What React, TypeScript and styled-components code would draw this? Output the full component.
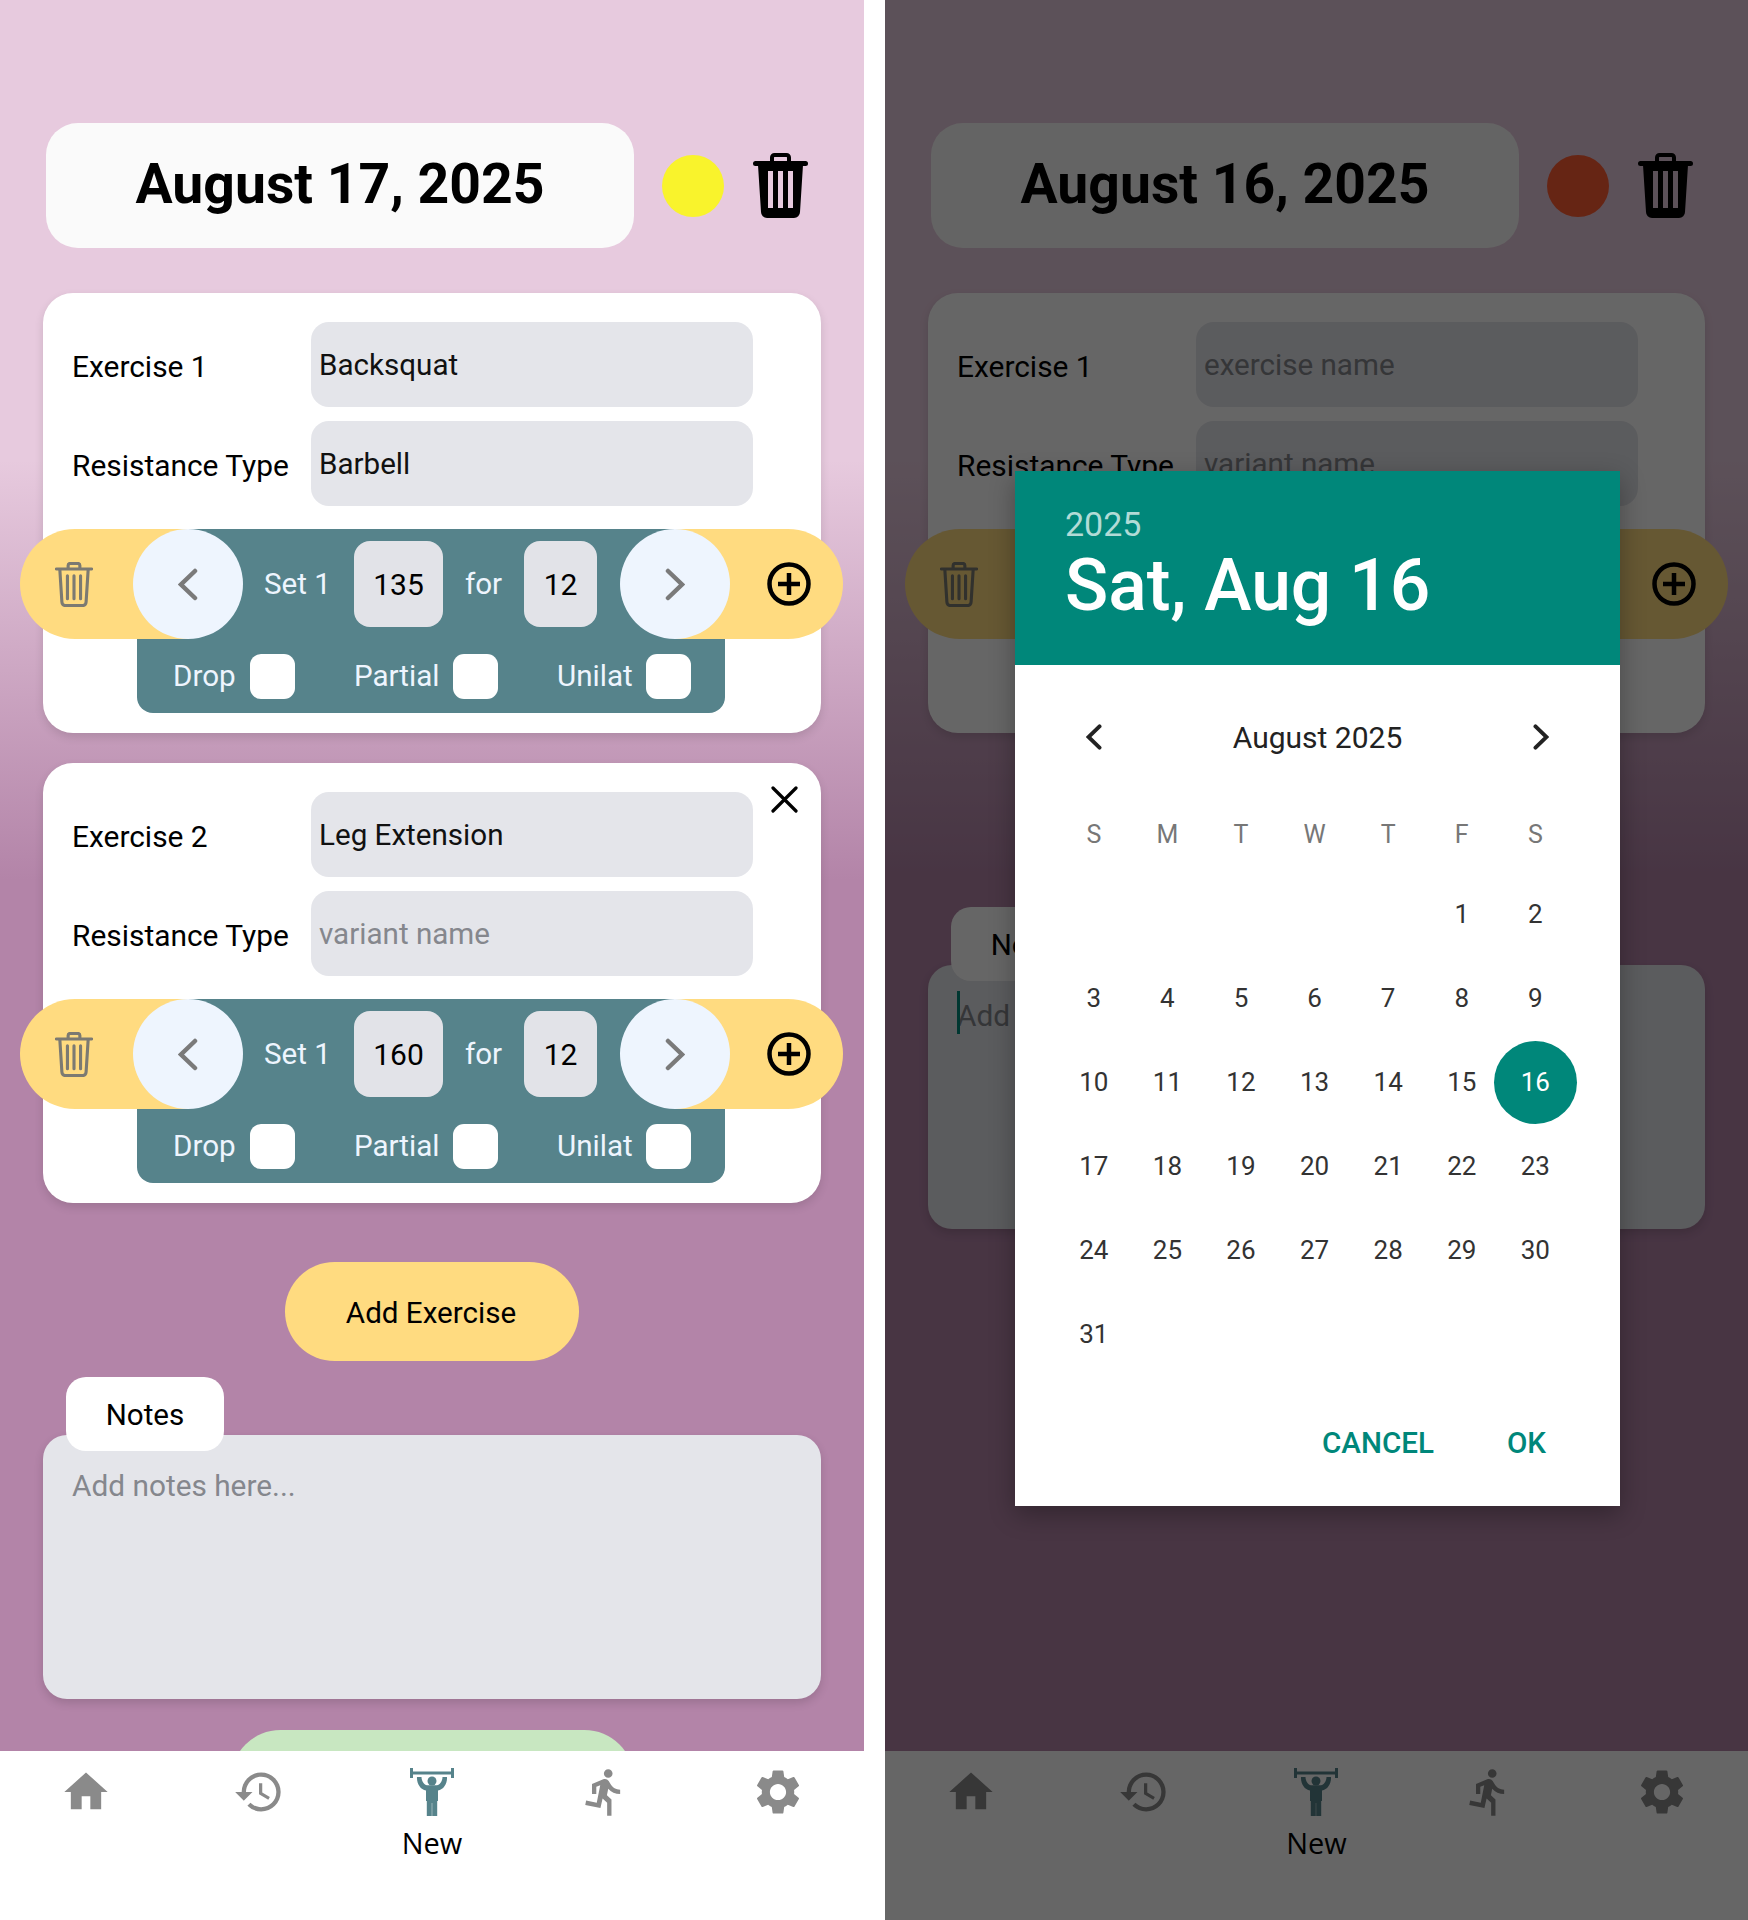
import {FC} from "react";
import styled, {createGlobalStyle} from "styled-components";
import {MdDirectionsRun, MdHistory, MdHome, MdSettings} from "react-icons/md";

const GlobalStyle = createGlobalStyle`
  * { box-sizing: border-box; }
  html, body { margin: 0; padding: 0; background: #fff; }
  body { font-family: Roboto, "Liberation Sans", sans-serif; color: #000; }
`;

const Page = styled.div`
  display: grid;
  grid-template-columns: 864px 863px;
  column-gap: 21px;
  width: 1748px;
  height: 1920px;
  overflow: hidden;
`;

const Phone = styled.div`
  position: relative;
  display: flex;
  flex-direction: column;
  height: 1920px;
  overflow: hidden;
`;

const Content = styled.div`
  flex: 1;
  min-height: 0;
  overflow: hidden;
  padding: 123px 43px 0;
  background: linear-gradient(180deg, #e7cade 0, #e7cade 460px, #b384a8 880px);
`;

const Header = styled.div`
  display: flex;
  align-items: center;
  height: 125px;
  margin-bottom: 45px;
  padding-left: 3px;
`;

const DatePill = styled.div`
  width: 588px;
  height: 125px;
  padding-bottom: 2px;
  border-radius: 32px;
  background: #fafafa;
  display: flex;
  align-items: center;
  justify-content: center;
  font-size: 55.300px;
  font-weight: 700;
`;

const StatusDot = styled.div<{$color: string}>`
  width: 62px;
  height: 62px;
  margin: 0 29px 0 28px;
  border-radius: 50%;
  background: ${(p) => p.$color};
`;

const Card = styled.div`
  position: relative;
  height: 440px;
  margin-bottom: 30px;
  padding: 29px 30px 20px;
  border-radius: 30px;
  background: #fff;
  box-shadow: 0 4px 10px rgba(0, 0, 0, 0.12);
`;

const FieldRow = styled.div`
  display: flex;
  align-items: center;
  height: 85px;
  margin-bottom: 14px;
`;

const FieldLabel = styled.div`
  width: 238px;
  margin-left: -1px;
  padding-top: 4px;
  font-size: 29.900px;
`;

const FieldBox = styled.div<{$empty?: boolean}>`
  width: 442px;
  height: 85px;
  margin-left: 1px;
  padding: 0 0 0 8px;
  border-radius: 18px;
  background: #e4e5ea;
  display: flex;
  align-items: center;
  font-size: 29.600px;
  color: ${(p) => (p.$empty ? "#85878d" : "#111")};
`;

const CloseButton = styled.svg`
  position: absolute;
  top: 23px;
  right: 23px;
  width: 27px;
  height: 27px;
`;

const SetBlock = styled.div`
  width: 823px;
  margin: 23px 0 0 -53px;
`;

const YellowPill = styled.div`
  display: flex;
  height: 110px;
  border-radius: 55px;
  background: #ffdb80;
`;

const LeftCap = styled.div`
  width: 117px;
  padding-left: 35px;
  display: flex;
  align-items: center;
`;

const RightCap = styled.div`
  width: 118px;
  padding-left: 42px;
  display: flex;
  align-items: center;
`;

// the teal only starts behind the middle of the round buttons, yellow shows around them
const SetRow = styled.div`
  width: 588px;
  display: flex;
  align-items: center;
  background: linear-gradient(90deg, transparent 51px, #56838b 51px, #56838b 537px, transparent 537px);
`;

const RoundButton = styled.div<{$side: "left" | "right"}>`
  flex: none;
  width: 110px;
  height: 110px;
  border-radius: 50%;
  background: #eef5fe;
  display: flex;
  align-items: center;
  justify-content: center;
  margin-left: ${(p) => (p.$side === "left" ? "-4px" : "23px")};
  margin-right: ${(p) => (p.$side === "right" ? "-6px" : "21px")};
`;

const SetText = styled.div<{$width: number; $center?: boolean}>`
  width: ${(p) => p.$width}px;
  font-size: 29.600px;
  color: #eef5fe;
  text-align: ${(p) => (p.$center ? "center" : "left")};
`;

const NumberBox = styled.div<{$width: number}>`
  flex: none;
  width: ${(p) => p.$width}px;
  height: 86px;
  border-radius: 16px;
  background: #e2e3e8;
  display: flex;
  align-items: center;
  justify-content: center;
  font-size: 30px;
  color: #000;
`;

const FlagRow = styled.div`
  width: 588px;
  height: 74px;
  margin-left: 117px;
  padding: 0 0 0 36px;
  display: flex;
  align-items: center;
  border-radius: 0 0 16px 16px;
  background: #56838b;
`;

const FlagItem = styled.div<{$width: number}>`
  width: ${(p) => p.$width}px;
  display: flex;
  align-items: center;
  justify-content: space-between;
  font-size: 29.600px;
  color: #eef5fe;
`;

const FlagGroup = styled.div<{$width: number}>`
  width: ${(p) => p.$width}px;
`;

const Checkbox = styled.div`
  width: 45px;
  height: 45px;
  border-radius: 11px;
  background: #fff;
`;

const AddExercise = styled.div`
  width: 294px;
  height: 99px;
  margin: 59px auto 0;
  padding: 2px 2px 0 0;
  border-radius: 50px;
  background: #ffdb80;
  display: flex;
  align-items: center;
  justify-content: center;
  font-size: 29.600px;
`;

const NotesTab = styled.div`
  position: relative;
  z-index: 1;
  width: 158px;
  height: 74px;
  margin: 16px 0 0 23px;
  padding-top: 2px;
  border-radius: 20px;
  background: #fff;
  display: flex;
  align-items: center;
  justify-content: center;
  font-size: 29.600px;
`;

const NotesArea = styled.div`
  position: relative;
  height: 264px;
  margin-top: -16px;
  padding: 32px 29px;
  border-radius: 24px;
  background: #e4e5ea;
  box-shadow: 0 4px 10px rgba(0, 0, 0, 0.14);
  font-size: 29.800px;
  line-height: 38px;
  color: #85878d;
`;

const Caret = styled.div`
  position: absolute;
  top: 26px;
  left: 29px;
  width: 3px;
  height: 43px;
  background: #00897b;
`;

const SaveButton = styled.div`
  width: 403px;
  height: 99px;
  margin: 31px auto 0;
  border-radius: 50px;
  background: #c8e7c1;
`;

const Nav = styled.div`
  flex: none;
  height: 169px;
  display: grid;
  grid-template-columns: repeat(5, 1fr);
  padding-top: 15px;
  background: #fff;
`;

const NavItem = styled.div<{$active?: boolean}>`
  display: flex;
  flex-direction: column;
  align-items: center;
  color: ${(p) => (p.$active ? "#56838b" : "#8a8a8a")};
`;

const NavSlot = styled.div`
  height: 52px;
  display: flex;
  align-items: center;
  justify-content: center;
`;

const NavLabel = styled.div`
  margin-top: 5px;
  font-family: "Open Sans", sans-serif;
  font-size: 29px;
  color: #000;
`;

const Scrim = styled.div`
  position: absolute;
  z-index: 2;
  inset: 0;
  background: rgba(0, 0, 0, 0.6);
`;

const Dialog = styled.div`
  position: absolute;
  z-index: 3;
  top: 471px;
  left: 130px;
  width: 605px;
  height: 1035px;
  display: flex;
  flex-direction: column;
  background: #fff;
  box-shadow: 0 8px 24px rgba(0, 0, 0, 0.3);
`;

const DialogHead = styled.div`
  height: 194px;
  padding: 32px 50px 0;
  background: #00877a;
  color: #fff;
`;

const HeadYear = styled.div`
  font-size: 34px;
  line-height: 42px;
  color: #b2dbd6;
`;

const HeadDate = styled.div`
  margin-top: 1px;
  font-size: 71.400px;
  line-height: 80px;
  font-weight: 500;
`;

const MonthRow = styled.div`
  height: 100px;
  margin: 22px 0 10px;
  padding: 0 71px;
  display: flex;
  align-items: center;
  justify-content: space-between;
  font-size: 30px;
  color: #222;
`;

const DayGrid = styled.div`
  display: grid;
  grid-template-columns: repeat(7, 73.6px);
  padding-left: 42px;
`;

const WeekCell = styled.div`
  height: 75px;
  display: flex;
  align-items: center;
  justify-content: center;
  font-size: 25px;
  color: #777;
`;

const DayCell = styled.div`
  height: 84px;
  display: flex;
  align-items: center;
  justify-content: center;
`;

const DayNumber = styled.div<{$selected?: boolean}>`
  width: 83px;
  height: 83px;
  flex: none;
  border-radius: 50%;
  display: flex;
  align-items: center;
  justify-content: center;
  font-size: 26px;
  background: ${(p) => (p.$selected ? "#00877a" : "transparent")};
  color: ${(p) => (p.$selected ? "#fff" : "#333")};
`;

const Actions = styled.div`
  margin-top: 35px;
  padding-right: 74px;
  height: 64px;
  display: flex;
  align-items: center;
  justify-content: flex-end;
  gap: 73px;
  font-size: 29.600px;
  font-weight: 500;
  color: #00877a;
`;

const TrashIcon: FC<{solid?: boolean; color: string; width: number; height: number}> = ({
  solid,
  color,
  width,
  height,
}) => (
  <svg width={width} height={height} viewBox="0 0 55 65">
    {solid ? (
      <>
        <path d="M19 9V4.5A2.5 2.5 0 0 1 21.500 2h12A2.500 2.500 0 0 1 36 4.500V9" fill="none" stroke={color} strokeWidth="4" />
        <rect x="0" y="8" width="55" height="5" rx="2.500" fill={color} />
        <path
          fillRule="evenodd"
          fill={color}
          d="M5 12h45l-3 47a6 6 0 0 1-6 6H14a6 6 0 0 1-6-6zM15 18v37h5V18zM25 18v37h5V18zM35 18v37h5V18z"
        />
      </>
    ) : (
      <g fill="none" stroke={color} strokeWidth="4.500" strokeLinecap="round" strokeLinejoin="round">
        <path d="M19 9V5a3 3 0 0 1 3-3h11a3 3 0 0 1 3 3v4" />
        <path d="M2 10h51" />
        <path d="M7 11l3 47a5 5 0 0 0 5 5h25a5 5 0 0 0 5-5l3-47" />
        <path d="M18 20v33M27.500 20v33M37 20v33" />
      </g>
    )}
  </svg>
);

const PlusIcon: FC = () => (
  <svg width="44" height="44" viewBox="0 0 44 44" fill="none" stroke="#000" strokeWidth="4.500">
    <circle cx="22" cy="22" r="19.500" />
    <path d="M22 11v22M11 22h22" />
  </svg>
);

const Chevron: FC<{dir: "left" | "right"; color: string; width: number; height: number; stroke: number}> = ({
  dir,
  color,
  width,
  height,
  stroke,
}) => (
  <svg width={width} height={height} viewBox="0 0 20 33" fill="none" stroke={color} strokeWidth={stroke} strokeLinecap="round">
    <path d={dir === "left" ? "M17 3L3 16.500 17 30" : "M3 3l14 13.500L3 30"} />
  </svg>
);

const LifterIcon: FC = () => (
  <svg width="44" height="48" viewBox="0 0 44 48" fill="currentColor">
    <rect x="0" y="0" width="3" height="10" />
    <rect x="41" y="0" width="3" height="10" />
    <rect x="3" y="3.500" width="38" height="3" />
    <circle cx="22" cy="13" r="4.500" />
    <path d="M7 9C6.500 15.500 10.500 22 16 22.500V33h.8v15h5V35h.4v13h5V33h.8V22.500C33.500 22 37.500 15.500 37 9h-4.500c0 4-2.500 7.800-5.500 8.300H17c-3-.5-5.500-4.300-5.500-8.300z" />
  </svg>
);

const ExerciseCard: FC<{
  index: number;
  name?: string;
  namePlaceholder: string;
  variant?: string;
  weight: string;
  reps: string;
  closable?: boolean;
}> = ({index, name, namePlaceholder, variant, weight, reps, closable}) => (
  <Card>
    {closable && (
      <CloseButton viewBox="0 0 27 27" fill="none" stroke="#000" strokeWidth="3.200" strokeLinecap="round">
        <path d="M2 2l23 23M25 2L2 25" />
      </CloseButton>
    )}
    <FieldRow>
      <FieldLabel>Exercise {index}</FieldLabel>
      <FieldBox $empty={!name}>{name || namePlaceholder}</FieldBox>
    </FieldRow>
    <FieldRow>
      <FieldLabel>Resistance Type</FieldLabel>
      <FieldBox $empty={!variant}>{variant || "variant name"}</FieldBox>
    </FieldRow>
    <SetBlock>
      <YellowPill>
        <LeftCap>
          <TrashIcon color="#7c7a72" width={38} height={45} />
        </LeftCap>
        <SetRow>
          <RoundButton $side="left">
            <Chevron dir="left" color="#7a7a7a" width={20} height={33} stroke={4.500} />
          </RoundButton>
          <SetText $width={90}>Set 1</SetText>
          <NumberBox $width={89}>{weight}</NumberBox>
          <SetText $width={81} $center>for</SetText>
          <NumberBox $width={73}>{reps}</NumberBox>
          <RoundButton $side="right">
            <Chevron dir="right" color="#7a7a7a" width={20} height={33} stroke={4.500} />
          </RoundButton>
        </SetRow>
        <RightCap>
          <PlusIcon />
        </RightCap>
      </YellowPill>
      <FlagRow>
        <FlagGroup $width={181}>
          <FlagItem $width={122}>
            Drop <Checkbox />
          </FlagItem>
        </FlagGroup>
        <FlagGroup $width={203}>
          <FlagItem $width={144}>
            Partial <Checkbox />
          </FlagItem>
        </FlagGroup>
        <FlagItem $width={134}>
          Unilat <Checkbox />
        </FlagItem>
      </FlagRow>
    </SetBlock>
  </Card>
);

const BottomNav: FC = () => (
  <Nav>
    <NavItem>
      <NavSlot>
        <MdHome size={52} />
      </NavSlot>
    </NavItem>
    <NavItem>
      <NavSlot>
        <MdHistory size={52} />
      </NavSlot>
    </NavItem>
    <NavItem $active>
      <NavSlot>
        <LifterIcon />
      </NavSlot>
      <NavLabel>New</NavLabel>
    </NavItem>
    <NavItem>
      <NavSlot>
        <MdDirectionsRun size={52} />
      </NavSlot>
    </NavItem>
    <NavItem>
      <NavSlot>
        <MdSettings size={54} />
      </NavSlot>
    </NavItem>
  </Nav>
);

const weekDays = ["S", "M", "T", "W", "T", "F", "S"];
// August 2025 starts on a Friday
const monthCells = [...Array(5).fill(0), ...Array.from({length: 31}, (_, i) => i + 1)];

const DatePicker: FC = () => (
  <Dialog>
    <DialogHead>
      <HeadYear>2025</HeadYear>
      <HeadDate>Sat, Aug 16</HeadDate>
    </DialogHead>
    <MonthRow>
      <Chevron dir="left" color="#222" width={16} height={26} stroke={5} />
      August 2025
      <Chevron dir="right" color="#222" width={16} height={26} stroke={5} />
    </MonthRow>
    <DayGrid>
      {weekDays.map((d, i) => (
        <WeekCell key={i}>{d}</WeekCell>
      ))}
      {monthCells.map((d, i) => (
        <DayCell key={i}>{d > 0 && <DayNumber $selected={d === 16}>{d}</DayNumber>}</DayCell>
      ))}
    </DayGrid>
    <Actions>
      <span>CANCEL</span>
      <span>OK</span>
    </Actions>
  </Dialog>
);

const App: FC = () => (
  <Page>
    <GlobalStyle />
    <Phone>
      <Content>
        <Header>
          <DatePill>August 17, 2025</DatePill>
          <StatusDot $color="#f9f32c" />
          <TrashIcon solid color="#000" width={55} height={65} />
        </Header>
        <ExerciseCard index={1} name="Backsquat" namePlaceholder="exercise name" variant="Barbell" weight="135" reps="12" />
        <ExerciseCard index={2} name="Leg Extension" namePlaceholder="exercise name" weight="160" reps="12" closable />
        <AddExercise>Add Exercise</AddExercise>
        <NotesTab>Notes</NotesTab>
        <NotesArea>Add notes here...</NotesArea>
        <SaveButton />
      </Content>
      <BottomNav />
    </Phone>
    <Phone>
      <Content>
        <Header>
          <DatePill>August 16, 2025</DatePill>
          <StatusDot $color="#ff5c32" />
          <TrashIcon solid color="#000" width={55} height={65} />
        </Header>
        <ExerciseCard index={1} namePlaceholder="exercise name" weight="135" reps="12" />
        <AddExercise>Add Exercise</AddExercise>
        <NotesTab>Notes</NotesTab>
        <NotesArea>
          <Caret />
          Add notes here...
        </NotesArea>
        <SaveButton />
      </Content>
      <BottomNav />
      <Scrim />
      <DatePicker />
    </Phone>
  </Page>
);

export default App;
